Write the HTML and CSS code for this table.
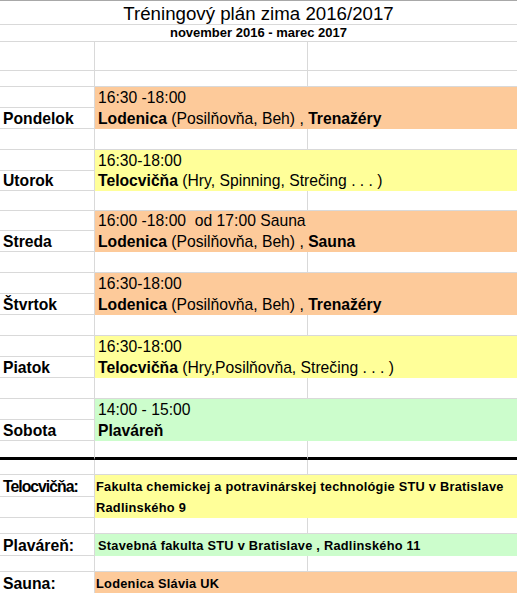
FILE: index.html
```html
<!DOCTYPE html>
<html lang="sk">
<head>
<meta charset="utf-8">
<title>Tréningový plán zima 2016/2017</title>
<link rel="stylesheet" href="styles.css">
</head>
<body>
<div class="sheet">
  <div class="row h24"><div class="cell full title"><span>Tréningový plán zima 2016/2017</span></div></div>
  <div class="row h17"><div class="cell full sub"><span>november 2016 - marec 2017</span></div></div>
  <div class="row h29"><div class="cell a"></div><div class="cell b"></div><div class="cell c"></div></div>
  <div class="row h16"><div class="cell a"></div><div class="cell b"></div><div class="cell c"></div></div>

  <div class="row h21"><div class="cell a"></div><div class="cell span orange"><span>16:30 -18:00</span></div></div>
  <div class="row h21"><div class="cell a day"><span>Pondelok</span></div><div class="cell span orange"><span><b>Lodenica</b> (Posilňovňa, Beh) , <b>Trenažéry</b></span></div></div>
  <div class="row h21"><div class="cell a"></div><div class="cell b"></div><div class="cell c"></div></div>

  <div class="row h21"><div class="cell a"></div><div class="cell span yellow"><span>16:30-18:00</span></div></div>
  <div class="row h20"><div class="cell a day"><span>Utorok</span></div><div class="cell span yellow"><span><b>Telocvičňa</b> (Hry, Spinning, Strečing . . . )</span></div></div>
  <div class="row h20"><div class="cell a"></div><div class="cell b"></div><div class="cell c"></div></div>

  <div class="row h20"><div class="cell a"></div><div class="cell span orange"><span>16:00 -18:00  od 17:00 Sauna</span></div></div>
  <div class="row h21"><div class="cell a day"><span>Streda</span></div><div class="cell span orange"><span><b>Lodenica</b> (Posilňovňa, Beh) , <b>Sauna</b></span></div></div>
  <div class="row h21"><div class="cell a"></div><div class="cell b"></div><div class="cell c"></div></div>

  <div class="row h21"><div class="cell a"></div><div class="cell span orange"><span>16:30-18:00</span></div></div>
  <div class="row h21"><div class="cell a day"><span>Štvrtok</span></div><div class="cell span orange"><span><b>Lodenica</b> (Posilňovňa, Beh) , <b>Trenažéry</b></span></div></div>
  <div class="row h21"><div class="cell a"></div><div class="cell b"></div><div class="cell c"></div></div>

  <div class="row h21"><div class="cell a"></div><div class="cell span yellow"><span>16:30-18:00</span></div></div>
  <div class="row h21"><div class="cell a day"><span>Piatok</span></div><div class="cell span yellow"><span><b>Telocvičňa</b> (Hry,Posilňovňa, Strečing . . . )</span></div></div>
  <div class="row h21"><div class="cell a"></div><div class="cell b"></div><div class="cell c"></div></div>

  <div class="row h21"><div class="cell a"></div><div class="cell span green"><span>14:00 - 15:00</span></div></div>
  <div class="row h21"><div class="cell a day"><span>Sobota</span></div><div class="cell span green"><span><b>Plaváreň</b></span></div></div>
  <div class="row h19 thick"><div class="cell a"></div><div class="cell b"></div><div class="cell c"></div></div>
  <div class="row h15"><div class="cell a"></div><div class="cell b"></div><div class="cell c"></div></div>

  <div class="row h22"><div class="cell a label narrow"><span>Telocvičňa:</span></div><div class="cell span yellow info"><span>Fakulta chemickej a potravinárskej technológie STU v Bratislave</span></div></div>
  <div class="row h21"><div class="cell a"></div><div class="cell span yellow info"><span>Radlinského 9</span></div></div>
  <div class="row h16"><div class="cell a"></div><div class="cell b"></div><div class="cell c"></div></div>
  <div class="row h22"><div class="cell a label"><span>Plaváreň:</span></div><div class="cell span green info indent"><span>Stavebná fakulta STU v Bratislave , Radlinského 11</span></div></div>
  <div class="row h16"><div class="cell a"></div><div class="cell b"></div><div class="cell c"></div></div>
  <div class="row h22"><div class="cell a label"><span>Sauna:</span></div><div class="cell span orange info"><span>Lodenica Slávia UK</span></div></div>
</div>
</body>
</html>
```

FILE: styles.css
```css
html, body {
  margin: 0;
  padding: 0;
  background: #ffffff;
}

body {
  font-family: "Liberation Sans", Arial, sans-serif;
  color: #000000;
  width: 517px;
  overflow: hidden;
}

.sheet {
  border-top: 1px solid #a8a8a8;
}

.row {
  display: grid;
  grid-template-columns: 95px 213px 1fr;
}

.h15 { height: 15px; }
.h16 { height: 16px; }
.h17 { height: 17px; }
.h19 { height: 19px; }
.h20 { height: 20px; }
.h21 { height: 21px; }
.h22 { height: 22px; }
.h24 { height: 24px; }
.h29 { height: 29px; }

.cell {
  box-sizing: border-box;
  display: flex;
  align-items: flex-end;
  border-bottom: 1px solid #d9d9d9;
  border-right: 1px solid #d9d9d9;
  white-space: pre;
  font-size: 15.7px;
  line-height: 16px;
  padding: 0 0 1px 3px;
  min-width: 0;
}

.cell.c {
  border-right: none;
}

.cell.full {
  grid-column: 1 / -1;
  border-right: none;
  justify-content: center;
  padding-left: 0;
}

.cell.span {
  grid-column: 2 / -1;
  border-right: none;
  border-bottom-color: transparent;
}

.title {
  font-size: 18.7px;
  line-height: 20px;
  padding-bottom: 0;
}

.sub {
  font-size: 13px;
  line-height: 14px;
  font-weight: bold;
  padding-bottom: 1px;
}

.day,
.label {
  font-weight: bold;
  padding-left: 3px;
}

.label {
  font-size: 15.8px;
  padding-bottom: 1px;
}

.narrow {
  letter-spacing: -1px;
}

.thick .cell {
  border-bottom: 3px solid #000000;
}

.orange { background: #fdca9a; }
.yellow { background: #ffff99; }
.green { background: #ccfdcc; }

.info {
  font-size: 12.8px;
  line-height: 14px;
  font-weight: bold;
  letter-spacing: 0.25px;
  padding-left: 1px;
  padding-bottom: 2px;
}

.info.indent {
  padding-left: 3px;
}
```
